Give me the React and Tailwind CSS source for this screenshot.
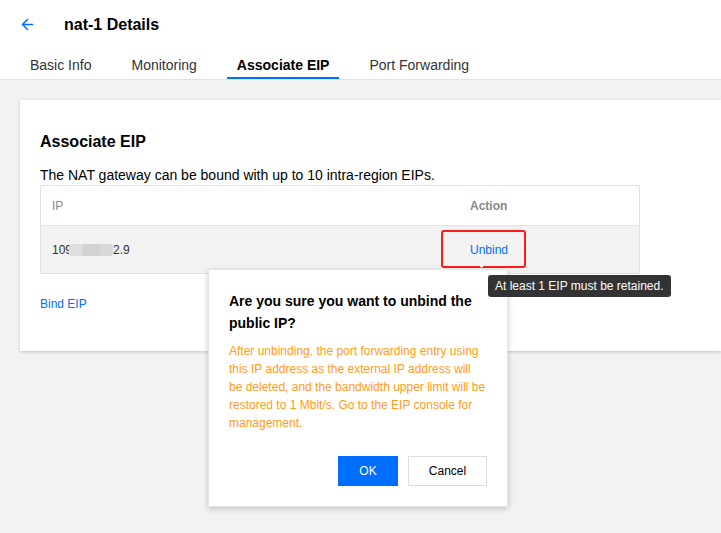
import { ArrowLeft } from "lucide-react";

const tabs = ["Basic Info", "Monitoring", "Associate EIP", "Port Forwarding"];

const UnbindConfirm = () => (
  <div className="absolute left-[208px] top-[269px] w-[300px] bg-white border border-[#e5e5e5] shadow-[0_2px_6px_rgba(0,0,0,0.2)] px-[20px] pt-[20px] pb-[20px]">
    <h3 className="text-[14px] leading-[22px] font-bold text-black">
      Are you sure you want to unbind the public IP?
    </h3>
    <p className="mt-[8px] text-[12px] leading-[18px] text-[#ff9c19]">
      After unbinding, the port forwarding entry using this IP address as the external IP address will be deleted, and the bandwidth upper limit will be restored to 1 Mbit/s. Go to the EIP console for management.
    </p>
    <div className="mt-[24px] flex justify-end gap-[10px]">
      <button className="w-[60px] h-[30px] bg-[#006eff] text-white text-[12px]">OK</button>
      <button className="w-[79px] h-[30px] border border-[#dddddd] bg-white text-black text-[12px]">Cancel</button>
    </div>
  </div>
);

export default function App() {
  return (
    <div className="relative w-[721px] h-[533px] overflow-hidden bg-[#f2f2f2] font-['Liberation_Sans',Arial,sans-serif] text-[#333]">
      {/* header */}
      <div className="bg-white border-b border-[#e2e2e2]">
        <div className="flex items-center h-[49px] pl-[19px]">
          <ArrowLeft className="w-[17px] h-[17px] text-[#006eff]" strokeWidth={2.2} />
          <span className="ml-[28px] text-[16px] font-bold text-black">nat-1 Details</span>
        </div>
        <div className="flex pl-[10px] h-[30px] text-[14px]">
          {tabs.map((t) => (
            <div
              key={t}
              className={
                t === "Associate EIP"
                  ? "mx-[10px] px-[10px] pt-[6px] border-b-2 border-[#006eff] font-bold text-black"
                  : "px-[20px] pt-[6px] text-[#333]"
              }
            >
              {t}
            </div>
          ))}
        </div>
      </div>

      {/* card */}
      <div className="ml-[20px] mt-[20px] bg-white shadow-[0_1px_3px_rgba(0,0,0,0.2)] pl-[20px] pt-[32px] pb-[38px]">
        <h2 className="text-[16px] leading-[20px] font-bold text-black">Associate EIP</h2>
        <p className="mt-[14px] mb-[1px] text-[14px] leading-[18px] text-black">
          The NAT gateway can be bound with up to 10 intra-region EIPs.
        </p>
        <div className="w-[600px] border border-[#e2e2e2] text-[12px]">
          <div className="flex h-[40px] items-center border-b border-[#e2e2e2] text-[#888]">
            <div className="w-[429px] pl-[11px]">IP</div>
            <div className="font-bold">Action</div>
          </div>
          <div className="flex h-[47px] items-center bg-[#f2f2f2] text-[#333]">
            <div className="w-[429px] pl-[11px] flex items-center">
              <span>109</span>
              <span className="-ml-[3px] flex h-[12px] rounded-[3px] overflow-hidden blur-[0.5px]">
                <span className="w-[14px] bg-[#dedede]" />
                <span className="w-[17px] bg-[#d2d2d2]" />
                <span className="w-[13px] bg-[#d8d8d8]" />
              </span>
              <span>2.9</span>
            </div>
            <div className="relative">
              <div className="absolute -left-[29px] -top-[11px] w-[85px] h-[38px] border-2 border-[#ff1a1a] rounded-[3px]" />
              <div className="absolute left-[9px] top-[21px] w-[5px] h-[5px] rotate-45 bg-white border-l border-t border-[#e5e5e5]" />
              <span className="relative text-[#006eff]">Unbind</span>
            </div>
          </div>
        </div>
        <div className="mt-[21px] text-[12px] text-[#006eff]">Bind EIP</div>
      </div>

      <UnbindConfirm />

      {/* tooltip */}
      <div className="absolute left-[488px] top-[275px] h-[22px] px-[7px] rounded-[3px] bg-[#333] text-white text-[12px] leading-[22px]">
        At least 1 EIP must be retained.
      </div>
    </div>
  );
}
